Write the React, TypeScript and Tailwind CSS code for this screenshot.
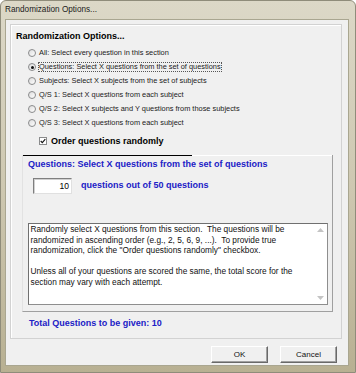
import React from 'react'

const options = [
  'All: Select every question in this section',
  'Questions: Select X questions from the set of questions',
  'Subjects: Select X subjects from the set of subjects',
  'Q/S 1: Select X questions from each subject',
  'Q/S 2: Select X subjects and Y questions from those subjects',
  'Q/S 3: Select X questions from each subject',
]

function Radio({ checked }: { checked?: boolean }) {
  return (
    <div className="w-[8px] h-[8px] rounded-full border border-[#8a8b8c] bg-gradient-to-br from-[#dcdcdc] to-white flex items-center justify-center shrink-0">
      {checked && <div className="w-[3px] h-[3px] rounded-full bg-[#111]" />}
    </div>
  )
}

function Arrow({ up }: { up?: boolean }) {
  return (
    <svg width="7" height="4" viewBox="0 0 7 4">
      <path d={up ? 'M0 4 L3.5 0 L7 4 Z' : 'M0 0 L3.5 4 L7 0 Z'} fill="#c4c4c4" />
    </svg>
  )
}

export default function App() {
  return (
    <div className="w-[356px] h-[373px] flex flex-col rounded-t-[6px] border border-[#8f8c7a] bg-gradient-to-b from-[#dcd8c7] via-[#cec8b1] to-[#b8b092] font-['Liberation_Sans',Arial,sans-serif] text-black">
      {/* title bar */}
      <div className="h-[18px] pl-[4px] flex items-center text-[8.2px] text-[#1b1b1b]">
        Randomization Options...
      </div>

      {/* client area */}
      <div className="flex-1 ml-[4px] mr-[6px] mb-[6px] bg-[#f0f0f0] border border-[#a9a690] flex flex-col">
        <div className="ml-[4px] mt-[4px] w-[332px] h-[315px] border border-[#d2d2d2] shadow-[inset_1px_1px_0_#ffffff] flex flex-col">
          <div className="pt-[5px] pl-[5px] h-[17px] leading-[12px] text-[9px] font-bold">
            Randomization Options...
          </div>

          <div className="mt-[4px] flex flex-col">
            {options.map((o, i) => (
              <div key={o} className="h-[14px] pl-[17px] flex items-center gap-[3px] text-[7.4px] text-[#1a1a1a]">
                <Radio checked={i === 1} />
                <span className={i === 1 ? 'outline outline-1 outline-dotted outline-[#555] leading-[8px]' : 'leading-[8px]'}>
                  {o}
                </span>
              </div>
            ))}
          </div>

          <div className="mt-[4px] h-[14px] pl-[28px] flex items-center gap-[4px]">
            <div className="w-[8px] h-[8px] border border-[#8a8b8c] bg-white flex items-center justify-center">
              <svg width="6" height="6" viewBox="0 0 6 6">
                <path d="M0.7 3 L2.3 4.6 L5.3 1.2" stroke="#111" strokeWidth="1.1" fill="none" />
              </svg>
            </div>
            <span className="text-[9px] font-bold leading-[11px]">Order questions randomly</span>
          </div>

          {/* details panel */}
          <div className="mt-[7px] ml-[11px] w-[311px] h-[157px] flex flex-col border-l border-l-[#e2e2e2] border-r border-r-[#a0a0a0] border-b border-b-[#a0a0a0]">
            <div className="h-[1px] flex">
              <div className="w-[169px] bg-black" />
              <div className="flex-1 bg-white" />
            </div>
            <div className="pt-[3px] pl-[5px] h-[14px] leading-[11px] text-[9px] font-bold text-[#2020c6]">
              Questions: Select X questions from the set of questions
            </div>
            <div className="mt-[8px] pl-[10px] flex items-center gap-[9px]">
              <div className="w-[39px] h-[16px] bg-white border border-t-[#7f7f7f] border-l-[#7f7f7f] border-r-[#e0e0e0] border-b-[#e0e0e0] shadow-[inset_1px_1px_0_#d0d0d0] flex items-center justify-end pr-[2px] text-[8.5px]">
                10
              </div>
              <span className="text-[9px] font-bold text-[#2020c6]">questions out of 50 questions</span>
            </div>
            <div className="mt-[29px] ml-[5px] w-[300px] h-[82px] bg-white border border-[#8e8e8e] border-t-[#707070] border-l-[#707070] flex">
              <div className="flex-1 pl-[1.5px] text-[8.3px] leading-[10.5px] whitespace-pre-wrap text-[#111]">
                {'Randomly select X questions from this section.  The questions will be\nrandomized in ascending order (e.g., 2, 5, 6, 9, ...).  To provide true\nrandomization, click the "Order questions randomly" checkbox.\n\nUnless all of your questions are scored the same, the total score for the\nsection may vary with each attempt.'}
              </div>
              <div className="w-[14px] flex flex-col items-center justify-between py-[4px]">
                <Arrow up />
                <Arrow />
              </div>
            </div>
          </div>

          <div className="mt-[6px] pl-[18px] h-[11px] leading-[11px] text-[9px] font-bold text-[#2020c6]">
            Total Questions to be given: 10
          </div>
        </div>

        {/* buttons */}
        <div className="mt-[7px] pr-[11px] flex justify-end gap-[12px]">
          {['OK', 'Cancel'].map(b => (
            <div
              key={b}
              className="w-[57px] h-[17px] flex items-center justify-center text-[8px] text-[#111] bg-[#f0f0f0] border border-t-white border-l-white border-r-[#696969] border-b-[#696969] shadow-[inset_-1px_-1px_0_#a0a0a0]"
            >
              {b}
            </div>
          ))}
        </div>
      </div>
    </div>
  )
}
